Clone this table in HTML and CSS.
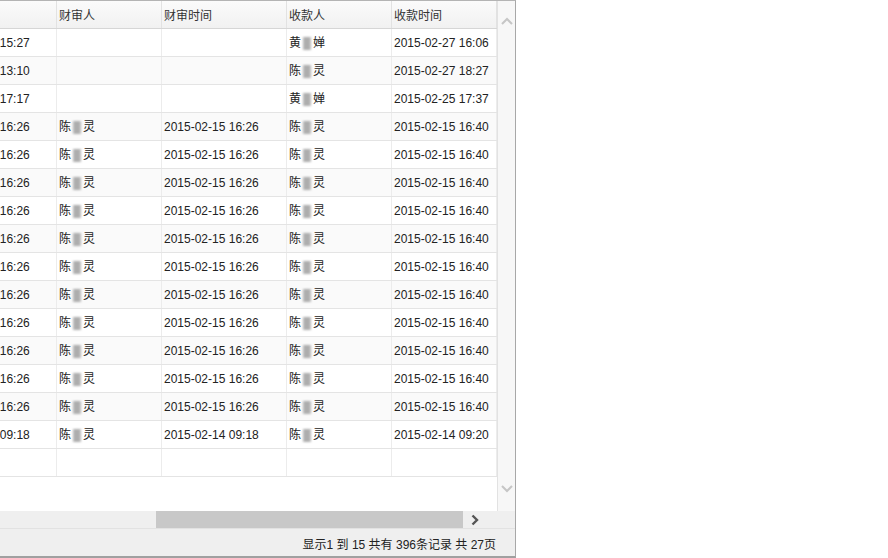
FILE: index.html
```html
<!DOCTYPE html>
<html lang="zh-CN">
<head>
<meta charset="utf-8">
<title>收款记录</title>
<link rel="stylesheet" href="styles.css">
</head>
<body>
<div class="panel">
  <div class="body-wrap">
    <div class="viewport">
      <div class="table">
        <div class="row head">
          <div class="cell"></div>
          <div class="cell">财审人</div>
          <div class="cell">财审时间</div>
          <div class="cell">收款人</div>
          <div class="cell">收款时间</div>
        </div>
        <div class="row"><div class="cell">2015-02-27 15:27</div><div class="cell"></div><div class="cell"></div><div class="cell">黄<span class="blur">某</span>婵</div><div class="cell">2015-02-27 16:06</div></div>
        <div class="row"><div class="cell">2015-02-27 13:10</div><div class="cell"></div><div class="cell"></div><div class="cell">陈<span class="blur">某</span>灵</div><div class="cell">2015-02-27 18:27</div></div>
        <div class="row"><div class="cell">2015-02-25 17:17</div><div class="cell"></div><div class="cell"></div><div class="cell">黄<span class="blur">某</span>婵</div><div class="cell">2015-02-25 17:37</div></div>
        <div class="row"><div class="cell">2015-02-15 16:26</div><div class="cell">陈<span class="blur">某</span>灵</div><div class="cell">2015-02-15 16:26</div><div class="cell">陈<span class="blur">某</span>灵</div><div class="cell">2015-02-15 16:40</div></div>
        <div class="row"><div class="cell">2015-02-15 16:26</div><div class="cell">陈<span class="blur">某</span>灵</div><div class="cell">2015-02-15 16:26</div><div class="cell">陈<span class="blur">某</span>灵</div><div class="cell">2015-02-15 16:40</div></div>
        <div class="row"><div class="cell">2015-02-15 16:26</div><div class="cell">陈<span class="blur">某</span>灵</div><div class="cell">2015-02-15 16:26</div><div class="cell">陈<span class="blur">某</span>灵</div><div class="cell">2015-02-15 16:40</div></div>
        <div class="row"><div class="cell">2015-02-15 16:26</div><div class="cell">陈<span class="blur">某</span>灵</div><div class="cell">2015-02-15 16:26</div><div class="cell">陈<span class="blur">某</span>灵</div><div class="cell">2015-02-15 16:40</div></div>
        <div class="row"><div class="cell">2015-02-15 16:26</div><div class="cell">陈<span class="blur">某</span>灵</div><div class="cell">2015-02-15 16:26</div><div class="cell">陈<span class="blur">某</span>灵</div><div class="cell">2015-02-15 16:40</div></div>
        <div class="row"><div class="cell">2015-02-15 16:26</div><div class="cell">陈<span class="blur">某</span>灵</div><div class="cell">2015-02-15 16:26</div><div class="cell">陈<span class="blur">某</span>灵</div><div class="cell">2015-02-15 16:40</div></div>
        <div class="row"><div class="cell">2015-02-15 16:26</div><div class="cell">陈<span class="blur">某</span>灵</div><div class="cell">2015-02-15 16:26</div><div class="cell">陈<span class="blur">某</span>灵</div><div class="cell">2015-02-15 16:40</div></div>
        <div class="row"><div class="cell">2015-02-15 16:26</div><div class="cell">陈<span class="blur">某</span>灵</div><div class="cell">2015-02-15 16:26</div><div class="cell">陈<span class="blur">某</span>灵</div><div class="cell">2015-02-15 16:40</div></div>
        <div class="row"><div class="cell">2015-02-15 16:26</div><div class="cell">陈<span class="blur">某</span>灵</div><div class="cell">2015-02-15 16:26</div><div class="cell">陈<span class="blur">某</span>灵</div><div class="cell">2015-02-15 16:40</div></div>
        <div class="row"><div class="cell">2015-02-15 16:26</div><div class="cell">陈<span class="blur">某</span>灵</div><div class="cell">2015-02-15 16:26</div><div class="cell">陈<span class="blur">某</span>灵</div><div class="cell">2015-02-15 16:40</div></div>
        <div class="row"><div class="cell">2015-02-15 16:26</div><div class="cell">陈<span class="blur">某</span>灵</div><div class="cell">2015-02-15 16:26</div><div class="cell">陈<span class="blur">某</span>灵</div><div class="cell">2015-02-15 16:40</div></div>
        <div class="row"><div class="cell">2015-02-14 09:18</div><div class="cell">陈<span class="blur">某</span>灵</div><div class="cell">2015-02-14 09:18</div><div class="cell">陈<span class="blur">某</span>灵</div><div class="cell">2015-02-14 09:20</div></div>
        <div class="row empty"><div class="cell"></div><div class="cell"></div><div class="cell"></div><div class="cell"></div><div class="cell"></div></div>
      </div>
    </div>
    <div class="vscroll">
      <svg class="chev" width="14" height="10" viewBox="0 0 14 10"><path d="M2 8 L7 3 L12 8" fill="none" stroke="#c6c6c6" stroke-width="2"/></svg>
      <svg class="chev" width="14" height="10" viewBox="0 0 14 10"><path d="M2 2 L7 7 L12 2" fill="none" stroke="#c6c6c6" stroke-width="2"/></svg>
    </div>
  </div>
  <div class="hscroll">
    <div class="track"><div class="thumb"></div></div>
    <div class="arrow">
      <svg width="10" height="12" viewBox="0 0 10 12"><path d="M2.5 1.5 L7 6 L2.5 10.5" fill="none" stroke="#555" stroke-width="2.4"/></svg>
    </div>
  </div>
  <div class="footer">显示1 到 15 共有 396条记录 共 27页</div>
</div>
</body>
</html>
```

FILE: styles.css
```css
* { box-sizing: border-box; }
html, body { margin: 0; padding: 0; background: #fff; }
body {
  font-family: "Liberation Sans", "Noto Sans CJK SC", Arial, sans-serif;
  font-size: 12px;
  color: #222;
}
.panel {
  width: 516px;
  height: 558px;
  border-top: 1px solid #b4b4b4;
  border-right: 1px solid #a8a8a8;
  border-bottom: 2px solid #a0a0a0;
  display: flex;
  flex-direction: column;
}
.body-wrap {
  height: 510px;
  display: flex;
}
.viewport {
  width: 497px;
  overflow: hidden;
  background: #fff;
}
.table {
  margin-left: -69px; /* horizontal scroll offset */
  width: 566px;
}
.row {
  display: grid;
  grid-template-columns: 126px 105px 125px 105px 105px;
  height: 28px;
  border-bottom: 1px solid #e4e4e4;
}
.row:nth-child(odd) { background: #fafafa; }
.row.head {
  background: linear-gradient(#fbfbfb, #f1f1f1);
  border-bottom: 1px solid #d6d6d6;
  color: #333;
}
.row.empty { background: #fff; }
.cell {
  border-right: 1px solid #ececec;
  padding: 1px 2px 0;
  display: flex;
  align-items: center;
  white-space: nowrap;
  overflow: hidden;
  line-height: 14px;
}
.cell:first-child { padding-left: 4px; }
.row.head .cell { border-right-color: #e2e2e2; padding-top: 3px; }
.blur {
  display: inline-block;
  width: 12px;
  height: 13px;
  color: transparent;
  background: linear-gradient(to right, transparent 2px, #b8b8b8 2px, #a9a9a9 6px, #bcbcbc 10px, transparent 10px);
  filter: blur(0.8px);
}
.vscroll {
  width: 18px;
  background: #f7f7f7;
  border-left: 1px solid #e2e2e2;
  display: flex;
  flex-direction: column;
  justify-content: space-between;
  align-items: center;
  padding: 15px 0 17px;
}
.chev { display: block; }
.hscroll {
  height: 17px;
  display: flex;
  background: #efefef;
}
.track {
  width: 465px;
  padding-left: 156px;
}
.thumb {
  width: 307px;
  height: 17px;
  background: #c8c8c8;
}
.arrow {
  flex: 1;
  display: flex;
  align-items: center;
  padding-left: 5px;
}
.arrow svg { display: block; }
.footer {
  height: 28px;
  background: #efefef;
  border-top: 1px solid #e2e2e2;
  display: flex;
  align-items: center;
  justify-content: flex-end;
  padding-right: 19px;
  padding-top: 1px;
  color: #222;
}
```
